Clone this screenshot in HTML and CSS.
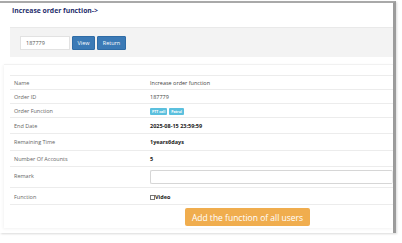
FILE: index.html
```html
<!DOCTYPE html>
<html>
<head>
  <meta charset="UTF-8">
  <title>Increase order function</title>
  <link rel="stylesheet" href="styles.css">
</head>
<body>

<div class="frame">
  <h3 class="page-title">Increase order function-&gt;</h3>

  <!-- recherche commande -->
  <div class="search-bar">
    <input type="text" class="search-input" value="187779">
    <button class="btn btn-primary btn-view">View</button>
    <button class="btn btn-primary btn-return">Return</button>
  </div>

  <!-- détail commande -->
  <div class="panel">
    <table class="info-table">
      <tr class="row-sm"><td class="label">Name</td><td>Increase order function</td></tr>
      <tr class="row-sm"><td class="label">Order ID</td><td>187779</td></tr>
      <tr class="row-sm">
        <td class="label">Order Function</td>
        <td><span class="badge">PTT call</span><span class="badge">Patrol</span></td>
      </tr>
      <tr class="row-md"><td class="label">End Date</td><td class="strong">2025-08-15 23:59:59</td></tr>
      <tr class="row-lg"><td class="label">Remaining Time</td><td class="strong">1years6days</td></tr>
      <tr class="row-md"><td class="label">Number Of Accounts</td><td class="strong">5</td></tr>
      <tr class="row-remark">
        <td class="label top">Remark</td>
        <td><input type="text" class="remark-input"></td>
      </tr>
      <tr class="row-func">
        <td class="label top">Function</td>
        <td class="strong"><label class="check"><span class="check-box"></span>Video</label></td>
      </tr>
    </table>
    <div class="actions">
      <button class="btn btn-warning">Add the function of all users</button>
    </div>
  </div>
</div>

</body>
</html>
```

FILE: styles.css
```css
/* --- RESET & BASE --- */
* {
  margin: 0;
  padding: 0;
  box-sizing: border-box;
}
html, body {
  height: 100%;
  background: #fff;
  font-family: 'Open Sans', 'Noto Sans', sans-serif;
  overflow: hidden;
}

/* --- CADRE --- */
.frame {
  width: 396px;
  height: 232px;
  margin-top: 1px;
  border-top: 2px solid #a9a9a9;
  border-right: 3px solid #9c9c9c;
  box-shadow: 1px 1px 2px rgba(0,0,0,0.15);
}

.page-title {
  padding: 3px 0 0 12px;
  height: 24px;
  font-size: 6.8px;
  line-height: 10px;
  font-weight: bold;
  color: #262d6c;
}

/* --- BARRE DE RECHERCHE --- */
.search-bar {
  display: flex;
  align-items: center;
  gap: 2px;
  height: 30px;
  margin-left: 10px;
  padding-left: 10px;
  background: #f3f3f3;
  border-top: 1px solid #e9e9e9;
}

.search-input {
  width: 50px;
  height: 14px;
  padding-left: 5px;
  border: 1px solid #e2e2e2;
  font-family: inherit;
  font-size: 5.5px;
  color: #555;
  outline: none;
}

.btn {
  border: none;
  border-radius: 1px;
  color: #fff;
  font-family: inherit;
  cursor: pointer;
}

.btn-primary {
  height: 14px;
  background: #3b7ab6;
  border: 1px solid #2f6ca6;
  font-size: 5.5px;
}
.btn-view { width: 23px; }
.btn-return { width: 29px; }

/* --- PANEAU --- */
.panel {
  height: 164px;
  margin: 7px 0 0 4px;
  padding: 10px 0 0 6px;
  border-top: 1px solid #f1f1f1;
  box-shadow: -1px 1px 3px rgba(0,0,0,0.05);
}

.info-table {
  width: 100%;
  border-collapse: collapse;
  font-size: 5.5px;
  color: #444;
}

.info-table td {
  border-top: 1px solid #ececec;
  vertical-align: middle;
  padding: 0;
}
.info-table tr:last-child td {
  border-bottom: 1px solid #ececec;
}

.info-table .label {
  width: 140px;
  padding-left: 4px;
  color: #666;
}
.info-table .top {
  vertical-align: top;
  padding-top: 5px;
}

.row-sm { height: 14px; }
.row-md { height: 16px; }
.row-lg { height: 17px; }
.row-remark { height: 21px; }
.row-func { height: 17px; }

.strong {
  font-weight: bold;
  color: #222;
}

.badge {
  display: inline-block;
  margin-right: 2px;
  padding: 0 2px;
  height: 7px;
  line-height: 7px;
  background: #5bc0de;
  color: #fff;
  font-size: 3.5px;
  font-weight: bold;
  border-radius: 1px;
  vertical-align: middle;
}

.remark-input {
  display: block;
  width: 100%;
  height: 14px;
  border: 1px solid #d6d6d6;
  border-right-color: #ececec;
  border-radius: 2px;
  outline: none;
}

.check {
  display: flex;
  align-items: center;
  padding-top: 2px;
}
.check-box {
  width: 5px;
  height: 5px;
  border: 1px solid #777;
  background: #fff;
}

/* --- ACTIONS --- */
.actions {
  display: flex;
  padding: 3px 0 0 175px;
}

.btn-warning {
  width: 125px;
  height: 18px;
  background: #f0ad4e;
  border-radius: 2px;
  font-size: 8.5px;
}
```
